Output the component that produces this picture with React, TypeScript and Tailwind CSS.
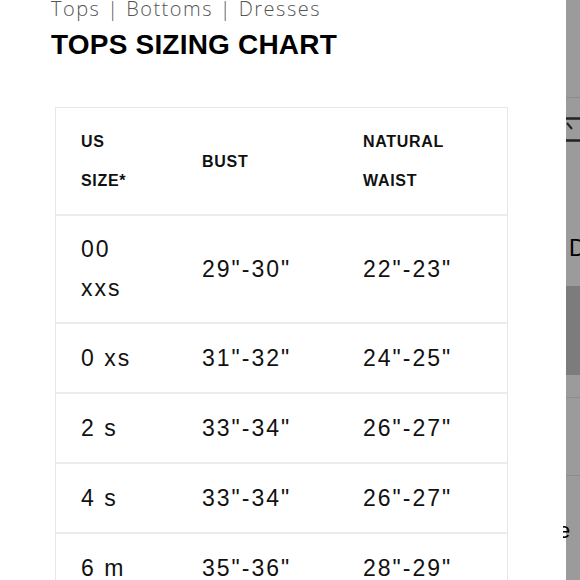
const rows = [
  { size: ['00', 'xxs'], bust: '29"-30"', waist: '22"-23"' },
  { size: ['0 xs'], bust: '31"-32"', waist: '24"-25"' },
  { size: ['2 s'], bust: '33"-34"', waist: '26"-27"' },
  { size: ['4 s'], bust: '33"-34"', waist: '26"-27"' },
  { size: ['6 m'], bust: '35"-36"', waist: '28"-29"' },
];

function SideStrip() {
  return (
    <div className="flex w-[14px] shrink-0 flex-col bg-[#9b9b9b] text-black">
      <div className="h-[98px] shrink-0 border-b border-[#8d8d8d]" />
      <div className="mt-[19px] h-[25px] shrink-0">
        <svg width="14" height="25" viewBox="0 0 14 25" aria-hidden="true">
          <path d="M0 1.5H14M0 23.5H14" stroke="#222" strokeWidth="2.5" />
          <path d="M1 6L6 12" stroke="#222" strokeWidth="2" />
        </svg>
      </div>
      <div className="mt-[91px] h-[30px] shrink-0 pl-[3px] font-['Liberation_Sans',sans-serif] text-[23px] leading-[30px]">
        D
      </div>
      <div className="mt-[23px] h-[89px] shrink-0 bg-[#7c7c7c]" />
      <div className="h-[23px] shrink-0 border-b border-[#8d8d8d]" />
      <div className="h-[78px] shrink-0 border-b border-[#8d8d8d]" />
    </div>
  );
}

export default function App() {
  return (
    <div className="relative flex h-[580px] w-[580px] overflow-hidden bg-white">
      <div className="flex-1 pl-[51px]">
        <p className="mt-[-4px] font-['Open_Sans',sans-serif] text-[20px] font-light leading-[26px] tracking-[1.5px] text-[#555]">
          Tops | Bottoms | Dresses
        </p>
        <h2 className="mt-[8px] font-['Liberation_Sans',sans-serif] text-[28px] font-bold leading-[30px] tracking-[0.2px] text-black">
          TOPS SIZING CHART
        </h2>

        <div className="ml-[4px] mt-[47px] w-[453px] border border-[#e6e6e6] font-['Liberation_Sans',sans-serif] text-[#111]">
          <div className="flex items-center border-b-2 border-[#ececec] py-[14px] pl-[25px] text-[16px] font-bold leading-[39px] tracking-[0.7px]">
            <div className="w-[121px]">
              <div>US</div>
              <div>SIZE*</div>
            </div>
            <div className="w-[161px]">BUST</div>
            <div>
              <div>NATURAL</div>
              <div>WAIST</div>
            </div>
          </div>
          {rows.map((row, i) => (
            <div
              key={i}
              className={`flex items-center border-b-2 border-[#ececec] py-[14px] pl-[25px] text-[23px] tracking-[2px] ${
                row.size.length > 1 ? 'leading-[39px]' : 'leading-[40px]'
              }`}
            >
              <div className="w-[121px]">
                {row.size.map((s) => (
                  <div key={s}>{s}</div>
                ))}
              </div>
              <div className="w-[161px]">{row.bust}</div>
              <div>{row.waist}</div>
            </div>
          ))}
        </div>
      </div>
      <SideStrip />
      <span className="absolute left-[563px] top-[518px] h-[26px] w-[7px] overflow-hidden font-['Liberation_Sans',sans-serif] text-[22px] leading-[26px] text-black">
        <span className="ml-[-5px]">e</span>
      </span>
    </div>
  );
}
